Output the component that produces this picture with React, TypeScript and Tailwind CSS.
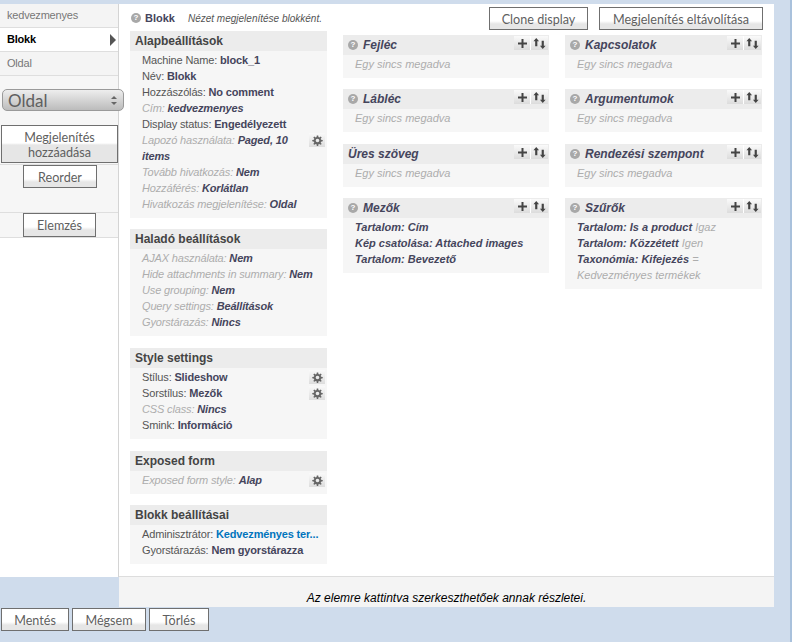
import type { ReactNode } from 'react';

const ui = "font-['Lato',sans-serif]";

function PageButton({ className, children }: { className: string; children: ReactNode }) {
  return (
    <button
      className={`${ui} block border border-[#6f6f6f] pt-[1px] text-[12.6px] leading-[15px] text-[#5f5f5f] ${className}`}
    >
      {children}
    </button>
  );
}

const short = 'bg-[linear-gradient(#ffffff_0,#ffffff_13px,#e6e6e6_16px,#e6e6e6_100%)]';
const tall = 'bg-[linear-gradient(#ffffff_0,#ffffff_17px,#e6e6e6_19px,#e6e6e6_100%)]';

function Gear() {
  return (
    <span className="mt-[1px] flex h-[14px] w-[16px] shrink-0 items-center justify-center bg-[linear-gradient(#fafafa,#dddddd)]">
      <svg width="11" height="11" viewBox="0 0 24 24" fill="#666666">
        <path d="M12 8a4 4 0 1 0 0 8 4 4 0 0 0 0-8zm-1.5-7h3l.6 3.6 1.9.8 3-2.1 2.1 2.1-2.1 3 .8 1.9 3.6.6v3l-3.6.6-.8 1.9 2.1 3-2.1 2.1-3-2.1-1.9.8-.6 3.6h-3l-.6-3.6-1.9-.8-3 2.1-2.1-2.1 2.1-3-.8-1.9-3.6-.6v-3l3.6-.6.8-1.9-2.1-3 2.1-2.1 3 2.1 1.9-.8z" fillRule="evenodd" />
      </svg>
    </span>
  );
}

function Help() {
  return (
    <span className="flex h-[10px] w-[10px] shrink-0 items-center justify-center rounded-full bg-[#a8a8a8] text-[8px] leading-none font-bold text-white not-italic">
      ?
    </span>
  );
}

function Row({ label, value, muted, gear, link }: { label: string; value: string; muted?: boolean; gear?: boolean; link?: boolean }) {
  return (
    <div className="flex items-start justify-between pr-[2px] pl-3 tracking-[-0.15px]">
      <div className={`shrink-0 ${muted ? 'text-[#adadad] italic' : 'text-[#555555]'} ${gear ? 'w-[166px]' : 'w-auto'}`}>
        {label}:{' '}
        <b className={link ? 'text-[#0074bd]' : 'text-[#45455c]'}>{value}</b>
      </div>
      {gear && <Gear />}
    </div>
  );
}

function LeftBlock({ title, className, children }: { title: string; className?: string; children: ReactNode }) {
  return (
    <section className={`bg-[#f6f6f6] pb-[6px] ${className ?? ''}`}>
      <h3 className="h-[20px] bg-[#ececec] px-[5px] text-[12px] leading-[20px] font-bold text-[#444444]">{title}</h3>
      <div className="pt-[1px] text-[11px] leading-4">{children}</div>
    </section>
  );
}

function RightBlock({ title, help = true, className, children }: { title: string; help?: boolean; className?: string; children?: ReactNode }) {
  return (
    <section className={`bg-[#f6f6f6] pb-[6px] ${className ?? ''}`}>
      <div className="flex h-[20px] items-center justify-between bg-[#ececec] pr-[1px] pl-[5px]">
        <h3 className="flex items-center gap-[5px] text-[12px] font-bold text-[#45455c] italic">
          {help && <Help />}
          {title}
        </h3>
        <div className="mt-[1px] flex h-[14px] self-start">
          <span className="flex w-[17px] items-center justify-center border-r border-white bg-[linear-gradient(#fafafa,#dcdcdc)]">
            <svg width="9" height="9" viewBox="0 0 9 9"><path d="M3.5 0h2v3.5H9v2H5.5V9h-2V5.5H0v-2h3.5z" fill="#444444" /></svg>
          </span>
          <span className="flex w-[17px] items-center justify-center bg-[linear-gradient(#fafafa,#dcdcdc)]">
            <svg width="13" height="11" viewBox="0 0 12 10" fill="#444444">
              <path d="M3 0l2.6 3H4v4.5H2V3H.4z" />
              <path d="M9 10L6.4 7H8V2.5h2V7h1.6z" />
            </svg>
          </span>
        </div>
      </div>
      <div className="pt-[1px] pl-3 text-[11px] leading-4">
        {children ?? <span className="text-[#adadad] italic">Egy sincs megadva</span>}
      </div>
    </section>
  );
}

function Tab({ label, active }: { label: string; active?: boolean }) {
  return (
    <div
      className={`flex h-6 items-center justify-between border-b border-[#dedede] pr-[2px] pl-[7px] text-[11px] tracking-[-0.2px] ${
        active ? 'bg-white font-bold text-black' : 'bg-[#f4f4f4] text-[#777777]'
      }`}
    >
      {label}
      {active && <span className="h-0 w-0 border-y-[6px] border-l-[6px] border-y-transparent border-l-[#555555]" />}
    </div>
  );
}

function Item({ name, rest }: { name: string; rest?: string }) {
  return (
    <>
      <b className="text-[#45455c] italic">{name}</b>
      {rest && <span className="text-[#adadad] italic"> {rest}</span>}
    </>
  );
}

export default function App() {
  return (
    <div className="flex h-[642px] w-[792px] flex-col overflow-hidden border-r-2 border-[#a9c1dc] bg-[#cfdcec] pt-1 font-['Liberation_Sans',sans-serif]">
      <div className="flex h-[603px] w-[774px] items-start">
        {/* Sidebar */}
        <aside className="h-[573px] w-[119px] shrink-0 border-r border-[#d4d4d4] bg-white">
          <Tab label="kedvezmenyes" />
          <Tab label="Blokk" active />
          <Tab label="Oldal" />
          <div className="h-[162px] border-b border-[#dedede] bg-[#f6f6f6]">
            <div className="h-[13px]" />
            <div className={`${ui} relative ml-[2px] flex h-[22px] w-[122px] items-center justify-between rounded-[5px] border border-[#9a9a9a] bg-[linear-gradient(#eeeeee,#bcbcbc)] pt-[1px] pr-[6px] pl-[5px] text-[17px] text-[#5f5f5f]`}>
              Oldal
              <span className="flex flex-col gap-[3px]">
                <span className="h-0 w-0 border-x-[3px] border-b-[3px] border-x-transparent border-b-[#666666]" />
                <span className="h-0 w-0 border-x-[3px] border-t-[3px] border-x-transparent border-t-[#666666]" />
              </span>
            </div>
            <PageButton className={`mt-[14px] ml-[1px] h-[38px] w-[117px] ${tall}`}>Megjelenítés hozzáadása</PageButton>
            <div className="mt-[1px] border-t border-[#dedede]">
              <PageButton className={`ml-[23px] h-[23px] w-[74px] ${short}`}>Reorder</PageButton>
            </div>
            <div className="mt-6 border-t border-[#dedede]">
              <PageButton className={`ml-[23px] h-[24px] w-[73px] ${short}`}>Elemzés</PageButton>
            </div>
          </div>
        </aside>

        {/* Main */}
        <main className="flex h-[603px] w-[655px] flex-col bg-white">
          <div className="flex h-[572px] gap-4 pl-[11px]">
            <div className="w-[197px] shrink-0">
              <div className="flex h-[27px] items-center pt-[1px] pl-[1px]">
                <Help />
                <b className="ml-[4px] text-[11px] text-[#45455c]">Blokk</b>
                <i className="ml-[13px] text-[10px] text-[#555555]">Nézet megjelenítése blokként.</i>
              </div>
              <LeftBlock title="Alapbeállítások">
                <Row label="Machine Name" value="block_1" />
                <Row label="Név" value="Blokk" />
                <Row label="Hozzászólás" value="No comment" />
                <Row label="Cím" value="kedvezmenyes" muted />
                <Row label="Display status" value="Engedélyezett" />
                <Row label="Lapozó használata" value="Paged, 10 items" muted gear />
                <Row label="Tovább hivatkozás" value="Nem" muted />
                <Row label="Hozzáférés" value="Korlátlan" muted />
                <Row label="Hivatkozás megjelenítése" value="Oldal" muted />
              </LeftBlock>
              <LeftBlock title="Haladó beállítások" className="mt-[11px]">
                <Row label="AJAX használata" value="Nem" muted />
                <Row label="Hide attachments in summary" value="Nem" muted />
                <Row label="Use grouping" value="Nem" muted />
                <Row label="Query settings" value="Beállítások" muted />
                <Row label="Gyorstárazás" value="Nincs" muted />
              </LeftBlock>
              <LeftBlock title="Style settings" className="mt-3">
                <Row label="Stílus" value="Slideshow" gear />
                <Row label="Sorstílus" value="Mezők" gear />
                <Row label="CSS class" value="Nincs" muted />
                <Row label="Smink" value="Információ" />
              </LeftBlock>
              <LeftBlock title="Exposed form" className="mt-3">
                <Row label="Exposed form style" value="Alap" muted gear />
              </LeftBlock>
              <LeftBlock title="Blokk beállításai" className="mt-[11px]">
                <Row label="Adminisztrátor" value="Kedvezményes ter..." link />
                <Row label="Gyorstárazás" value="Nem gyorstárazza" />
              </LeftBlock>
            </div>

            <div className="w-[420px] shrink-0">
              <div className="flex justify-end gap-[11px] pt-[3px]">
                <PageButton className={`h-[23px] w-[99px] ${short}`}>Clone display</PageButton>
                <PageButton className={`h-[23px] w-[164px] ${short}`}>Megjelenítés eltávolítása</PageButton>
              </div>
              <div className="mt-[5px] flex gap-4">
                <div className="w-[206px] shrink-0">
                  <RightBlock title="Fejléc" />
                  <RightBlock title="Lábléc" className="mt-[11px]" />
                  <RightBlock title="Üres szöveg" help={false} className="mt-3" />
                  <RightBlock title="Mezők" className="mt-[11px]">
                    <div><Item name="Tartalom: Cím" /></div>
                    <div><Item name="Kép csatolása: Attached images" /></div>
                    <div><Item name="Tartalom: Bevezető" /></div>
                  </RightBlock>
                </div>
                <div className="w-[197px] shrink-0">
                  <RightBlock title="Kapcsolatok" />
                  <RightBlock title="Argumentumok" className="mt-[11px]" />
                  <RightBlock title="Rendezési szempont" className="mt-3" />
                  <RightBlock title="Szűrők" className="mt-[11px]">
                    <div><Item name="Tartalom: Is a product" rest="Igaz" /></div>
                    <div><Item name="Tartalom: Közzétett" rest="Igen" /></div>
                    <div><Item name="Taxonómia: Kifejezés" rest="= Kedvezményes termékek" /></div>
                  </RightBlock>
                </div>
              </div>
            </div>
          </div>
          <footer className="flex h-[31px] items-end justify-center border-t border-[#dddddd] bg-[#f4f4f4] text-[12px] text-black italic">
            Az elemre kattintva szerkeszthetőek annak részletei.
          </footer>
        </main>
      </div>

      <div className="mt-[1px] flex gap-[3px] pl-[1px]">
        <PageButton className={`h-[23px] w-[68px] ${short}`}>Mentés</PageButton>
        <PageButton className={`h-[23px] w-[74px] ${short}`}>Mégsem</PageButton>
        <PageButton className={`h-[23px] w-[60px] ${short}`}>Törlés</PageButton>
      </div>
    </div>
  );
}
